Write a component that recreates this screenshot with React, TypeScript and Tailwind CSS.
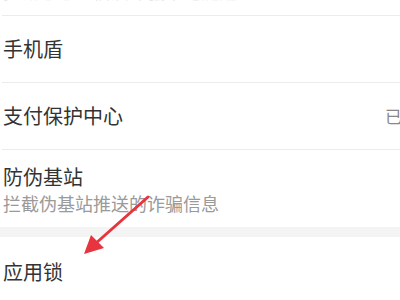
import React from "react";

export default function App() {
  return (
    <div
      className="relative w-[400px] h-[300px] overflow-hidden bg-white text-[#333333]"
      style={{ fontFamily: '"Noto Sans CJK SC", "Noto Sans", sans-serif' }}
    >
      <div className="h-[15px] overflow-hidden">
        <div className="-mt-[19px] pl-[3px] text-[18px] leading-[20px] text-[#e6e6e6]">
          拦截恶意短信及诈骗来电提醒
        </div>
      </div>
      <div className="h-[1px] ml-[2px] bg-[#ececec]" />
      <div className="h-[66px] flex items-center pl-[3px] text-[20px]">手机盾</div>
      <div className="h-[1px] ml-[2px] bg-[#ececec]" />
      <div className="h-[66px] flex items-center justify-between pl-[3px] text-[20px]">
        <span>支付保护中心</span>
        <span className="text-[17px] text-[#888888] -mr-[2px]">已</span>
      </div>
      <div className="h-[1px] ml-[2px] bg-[#ececec]" />
      <div className="h-[77px] flex flex-col pl-[3px] pt-[13px]">
        <span className="text-[20px] leading-[28px]">防伪基站</span>
        <span className="text-[18px] leading-[22px] mt-[1px] text-[#9a9a9a]">拦截伪基站推送的诈骗信息</span>
      </div>
      <div className="h-[10px] bg-[#f4f4f4]" />
      <div className="h-[70px] flex items-center pl-[3px] text-[20px]">应用锁</div>
      <svg className="absolute left-0 top-0" width="400" height="300" viewBox="0 0 400 300">
        <line x1="148" y1="197" x2="95" y2="244" stroke="#e8343e" strokeWidth="3" strokeLinecap="round" />
        <polygon points="84,254 91,235 104,248" fill="#e8343e" />
      </svg>
    </div>
  );
}
